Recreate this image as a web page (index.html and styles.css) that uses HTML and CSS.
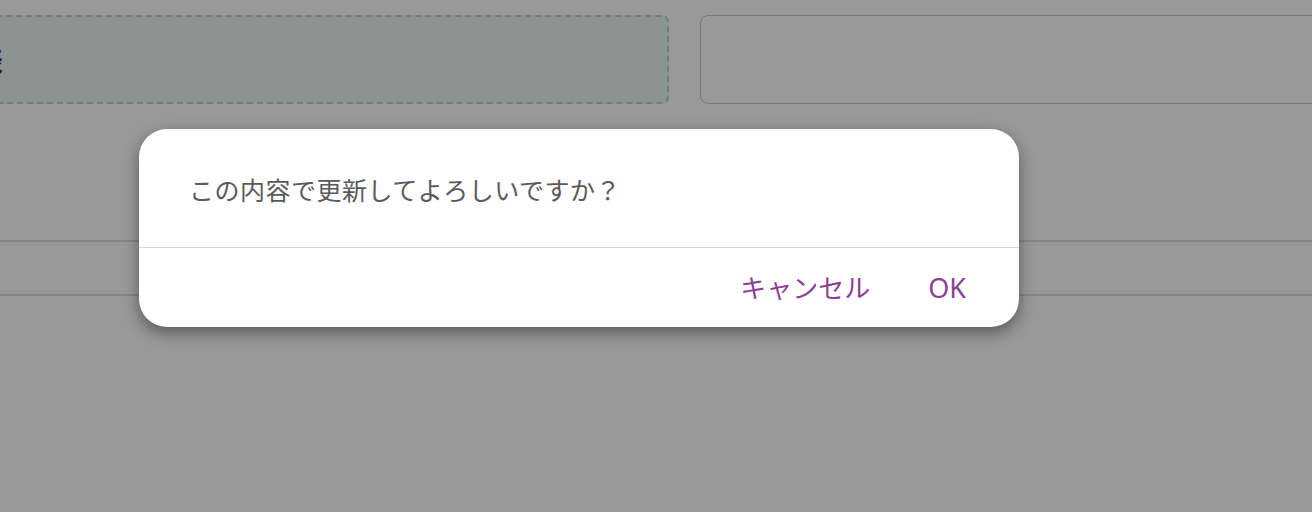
FILE: index.html
```html
<!DOCTYPE html>
<html lang="ja">
<head>
<meta charset="utf-8">
<title>確認</title>
<link rel="stylesheet" href="styles.css">
</head>
<body>
<div class="page">
  <div class="top">
    <div class="drop"><span class="drop-label">表</span></div>
    <div class="field"></div>
  </div>
  <div class="rows">
    <div class="row"></div>
    <div class="row"></div>
  </div>
</div>
<div class="dialog" role="dialog">
  <div class="message">この内容で更新してよろしいですか？</div>
  <div class="actions">
    <button class="btn">キャンセル</button>
    <button class="btn ok">OK</button>
  </div>
</div>
</body>
</html>
```
FILE: styles.css
```css
html, body {
  margin: 0;
  padding: 0;
}
body {
  background: #999999;
  width: 1312px;
  height: 512px;
  overflow: hidden;
  font-family: "Noto Sans", "Noto Sans CJK JP", sans-serif;
  position: relative;
}
.page {
  padding-top: 15px;
}
.top {
  display: flex;
  gap: 31px;
  margin-left: -11px;
}
.drop {
  flex: none;
  width: 676px;
  height: 85px;
  box-sizing: content-box;
  background: #8c9390;
  border: 2px dashed #6d807b;
  border-radius: 7px;
  display: flex;
  align-items: center;
  overflow: hidden;
}
.drop-label {
  font-size: 26px;
  color: #1e1e1e;
  margin-left: -14px;
  font-weight: 700;
  font-family: "Noto Sans CJK JP", sans-serif;
}
.field {
  flex: none;
  width: 660px;
  height: 87px;
  border: 1.5px solid #787878;
  border-radius: 8px;
}
.rows {
  margin-top: 136px;
}
.row {
  height: 52px;
  border-top: 2px solid #858585;
}
.dialog {
  position: absolute;
  left: 139px;
  top: 129px;
  width: 880px;
  height: 198px;
  background: #ffffff;
  border-radius: 28px;
  box-shadow: 0 6px 16px rgba(0, 0, 0, 0.42);
  display: flex;
  flex-direction: column;
  overflow: hidden;
}
.message {
  height: 119px;
  box-sizing: border-box;
  padding: 42px 50px 0;
  font-size: 25px;
  letter-spacing: 0.5px;
  line-height: 37px;
  color: #5a5a5a;
  border-bottom: 1.5px solid #d5d5d5;
  font-family: "Noto Sans CJK JP", sans-serif;
}
.actions {
  flex: 1;
  display: flex;
  justify-content: flex-end;
  align-items: center;
  gap: 58px;
  padding: 0 53px 0 0;
}
.btn {
  background: none;
  border: 0;
  padding: 0;
  font-size: 26px;
  color: #8c3f95;
  font-family: "Noto Sans", "Noto Sans CJK JP", sans-serif;
  line-height: 36px;
}
.btn.ok {
  font-size: 27px;
}
```
